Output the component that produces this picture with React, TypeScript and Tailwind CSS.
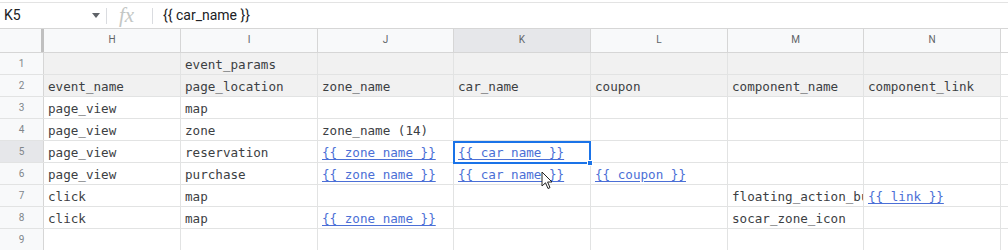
import React from "react";

type Cell = { text?: string; link?: boolean };

const cols = ["H", "I", "J", "K", "L", "M", "N"];
const widths = ["w-[137px]", "w-[137px]", "w-[136px]", "w-[137px]", "w-[137px]", "w-[136px]", "w-[137px]"];

const rows: Cell[][] = [
  [{}, { text: "event_params" }, {}, {}, {}, {}, {}],
  [
    { text: "event_name" },
    { text: "page_location" },
    { text: "zone_name" },
    { text: "car_name" },
    { text: "coupon" },
    { text: "component_name" },
    { text: "component_link" },
  ],
  [{ text: "page_view" }, { text: "map" }, {}, {}, {}, {}, {}],
  [{ text: "page_view" }, { text: "zone" }, { text: "zone_name (14)" }, {}, {}, {}, {}],
  [
    { text: "page_view" },
    { text: "reservation" },
    { text: "{{ zone_name }}", link: true },
    { text: "{{ car_name }}", link: true },
    {},
    {},
    {},
  ],
  [
    { text: "page_view" },
    { text: "purchase" },
    { text: "{{ zone_name }}", link: true },
    { text: "{{ car_name }}", link: true },
    { text: "{{ coupon }}", link: true },
    {},
    {},
  ],
  [{ text: "click" }, { text: "map" }, {}, {}, {}, { text: "floating_action_button" }, { text: "{{ link }}", link: true }],
  [{ text: "click" }, { text: "map" }, { text: "{{ zone_name }}", link: true }, {}, {}, { text: "socar_zone_icon" }, {}],
  [{}, {}, {}, {}, {}, {}, {}],
];

export default function App() {
  return (
    <div className="w-[1008px] h-[250px] overflow-hidden bg-white relative font-['DejaVu_Sans_Mono',monospace]">
      {/* Formula bar */}
      <div className="mt-[2px] h-[26px] border-t border-[#e3e3e3] flex items-center font-['Roboto',sans-serif] text-[14px] text-[#202124]">
        <div className="w-[106px] flex items-center justify-between pl-[4px] pr-[6px]">
          <span>K5</span>
          <span className="w-0 h-0 border-l-[4px] border-r-[4px] border-t-[5px] border-l-transparent border-r-transparent border-t-[#5f6368]" />
        </div>
        <div className="w-px h-[16px] bg-[#dadce0]" />
        <span className="ml-[12px] w-[33px] font-['Liberation_Serif',serif] italic text-[21px] text-[#c4c7c5] leading-none">fx</span>
        <div className="w-px h-[16px] bg-[#dadce0]" />
        <span className="ml-[10px]">{"{{ car_name }}"}</span>
      </div>

      {/* Column headers */}
      <div className="flex h-[25px] border-t border-b border-[#d6d6d6] bg-[#f8f9fa] font-['Roboto',sans-serif] text-[10px] text-[#5f6368]">
        <div className="w-[44px] shrink-0 border-r-[3px] border-[#c0c0c0]" />
        {cols.map((c, i) => (
          <div
            key={c}
            className={`${widths[i]} shrink-0 flex items-start pt-[3px] justify-center border-r border-[#d6d6d6] ${c === "K" ? "bg-[#e6e7ea]" : ""}`}
          >
            {c}
          </div>
        ))}
        <div className="flex-1 bg-white" />
      </div>

      {/* Rows */}
      {rows.map((row, r) => (
        <div key={r} className="flex h-[22px] border-b border-[#e2e3e3] text-[12.6px] leading-[16px]">
          <div
            className={`w-[44px] shrink-0 flex items-end pb-[2px] justify-center border-r border-[#d6d6d6] font-['Roboto',sans-serif] text-[10px] text-[#80868b] ${r === 4 ? "bg-[#e6e7ea]" : "bg-[#f8f9fa]"}`}
          >
            {r + 1}
          </div>
          {row.map((cell, c) => (
            <div
              key={c}
              className={`${widths[c]} shrink-0 flex items-end pb-[1px] px-[4px] border-r border-[#e2e3e3] overflow-hidden whitespace-nowrap ${r < 2 ? "bg-[#f1f1f1]" : "bg-white"}`}
            >
              {cell.text && (
                <span className={cell.link ? "text-[#4b6fd6] underline underline-offset-2" : "text-[#3c4043]"}>
                  {cell.text}
                </span>
              )}
            </div>
          ))}
          <div className="flex-1 bg-white" />
        </div>
      ))}

      {/* Selected cell K5 */}
      <div className="absolute left-[453px] top-[141px] w-[138px] h-[23px] border-2 border-[#1a73e8] pointer-events-none" />
      <div className="absolute left-[587px] top-[160px] w-[6px] h-[6px] bg-[#1a73e8] border border-white" />

      {/* Mouse cursor */}
      <svg className="absolute left-[541px] top-[171px]" width="12" height="19" viewBox="0 0 12 19">
        <path d="M1 1 L1 15 L4.5 11.8 L7 17.5 L9 16.6 L6.6 11 L11 11 Z" fill="#fff" stroke="#222" strokeWidth="1" strokeLinejoin="round" />
      </svg>
    </div>
  );
}
